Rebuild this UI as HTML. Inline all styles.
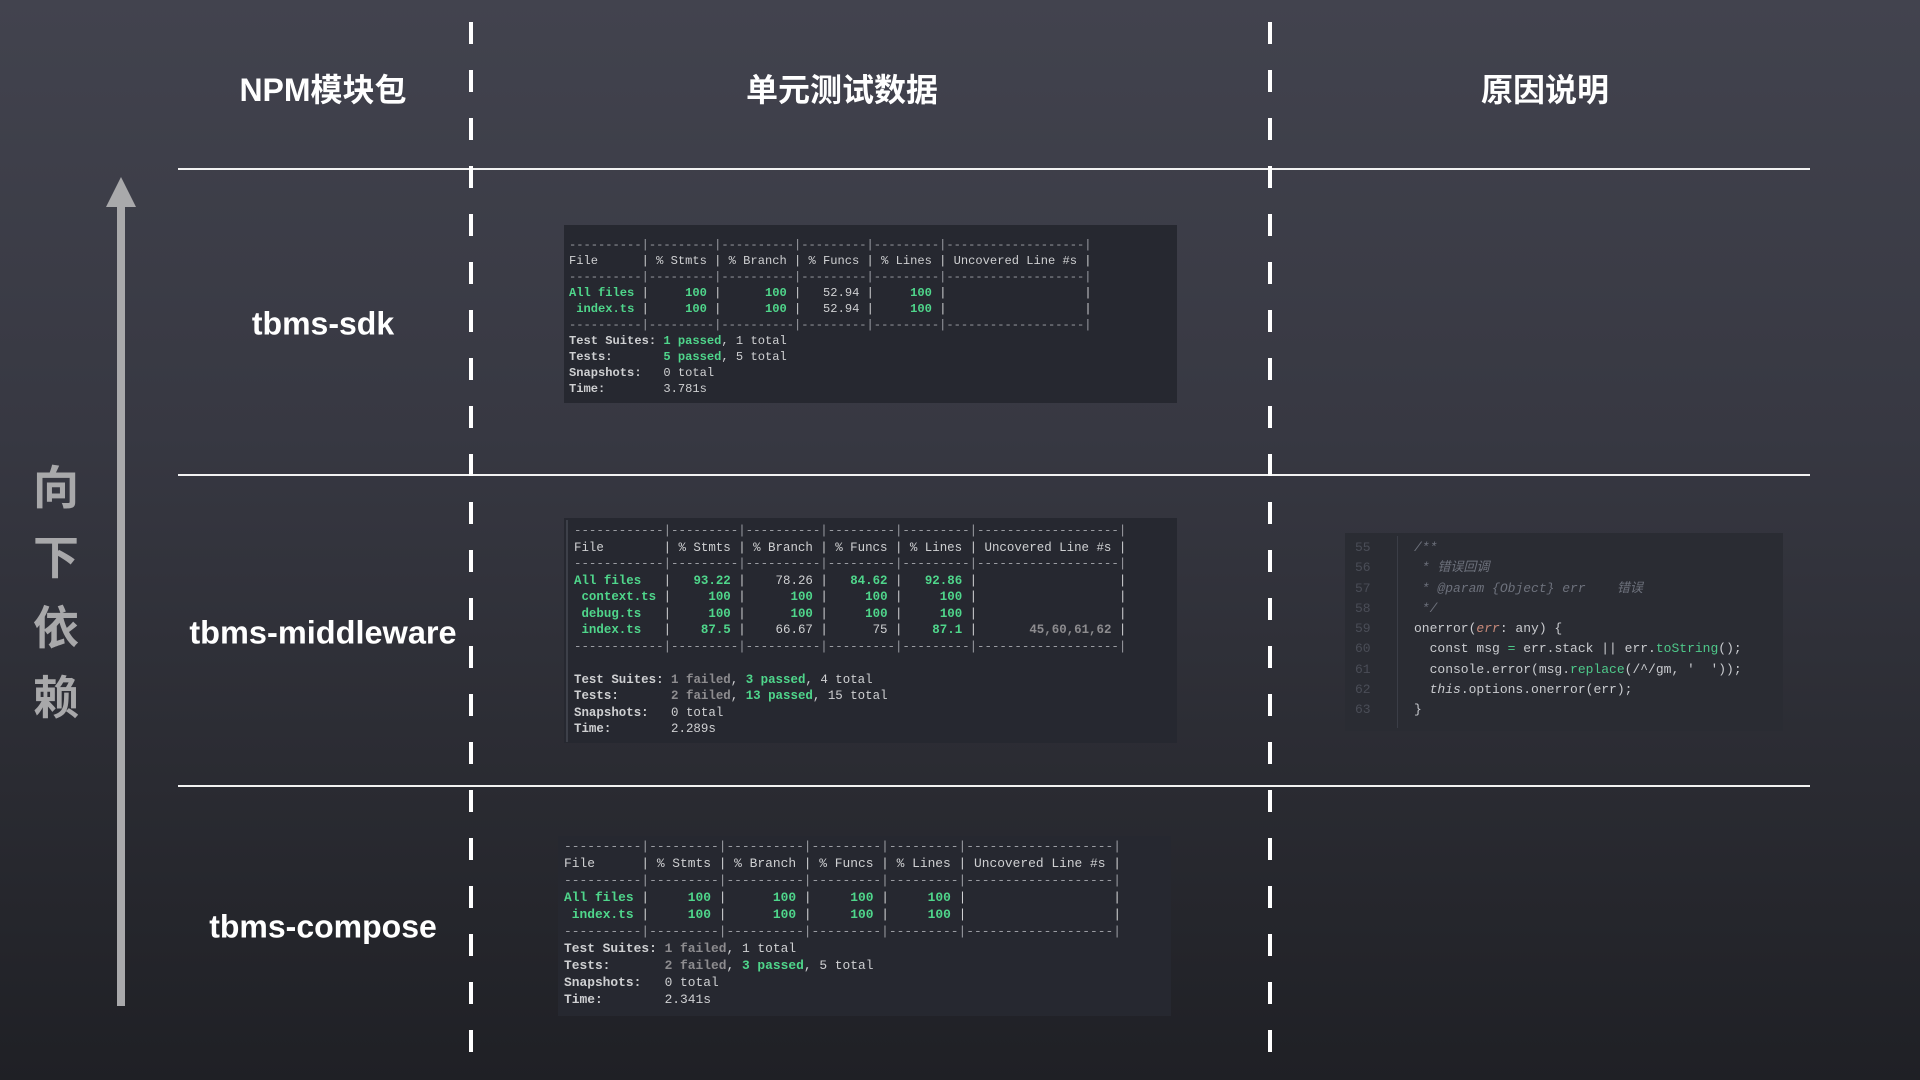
<!DOCTYPE html>
<html><head><meta charset="utf-8">
<style>
*{margin:0;padding:0;box-sizing:border-box}
html,body{width:1920px;height:1080px;overflow:hidden}
body{background:linear-gradient(180deg,#42434e 0%,#373842 40%,#2b2c33 70%,#1f2025 100%);position:relative;font-family:"Liberation Sans","Noto Sans CJK SC",sans-serif;color:#fff}
.abs{position:absolute}
.h{font-weight:bold;font-size:32px;transform:translate(-50%,-50%);white-space:nowrap}
.hl{position:absolute;height:2px;background:#f2f2f2;left:178px;width:1632px}
.dash{position:absolute;width:4px;top:22px;height:1036px;background:repeating-linear-gradient(180deg,#fff 0,#fff 22px,transparent 22px,transparent 48px)}
.term{position:absolute;background:#262830}
pre{position:absolute;font-family:"Liberation Mono",monospace;color:#cfd0d2;white-space:pre}
.g{color:#4fd68b;font-weight:bold}
.f{color:#8d8c8f;font-weight:bold}
.b{font-weight:bold}
.d{color:#9a9ca2}
.code{font-family:"Liberation Mono",monospace;font-size:13px;line-height:20.3px;color:#c9cbcf}
.c{color:#6d717c;font-style:italic}
.n{color:#4a4d57}
.gr{color:#4ec98a}
.or{color:#c98a7a;font-style:italic}
.it{font-style:italic}
</style></head><body>

<div class="abs h" style="left:323px;top:88px">NPM模块包</div>
<div class="abs h" style="left:842px;top:88px">单元测试数据</div>
<div class="abs h" style="left:1545px;top:88px">原因说明</div>

<div class="hl" style="top:168px"></div>
<div class="hl" style="top:474px"></div>
<div class="hl" style="top:785px"></div>

<div class="dash" style="left:469px"></div>
<div class="dash" style="left:1268px"></div>

<div class="abs" style="left:117px;top:198px;width:8px;height:808px;background:#a9a9ab"></div>
<div class="abs" style="left:106px;top:177px;width:0;height:0;border-left:15px solid transparent;border-right:15px solid transparent;border-bottom:30px solid #a9a9ab"></div>

<div class="abs" style="left:33px;top:453px;width:46px;font-size:46px;line-height:70px;font-weight:bold;color:#a8a8aa;text-align:center">向<br>下<br>依<br>赖</div>

<div class="abs h" style="left:323px;top:324px">tbms-sdk</div>
<div class="abs h" style="left:323px;top:633px;font-size:32.5px">tbms-middleware</div>
<div class="abs h" style="left:323px;top:927px">tbms-compose</div>

<div class="term" style="left:564px;top:225px;width:613px;height:178px"></div>
<pre style="left:569px;top:237px;font-size:12.1px;line-height:16px"><span class="d">----------|---------|----------|---------|---------|-------------------|</span>
File      | % Stmts | % Branch | % Funcs | % Lines | Uncovered Line #s |
<span class="d">----------|---------|----------|---------|---------|-------------------|</span>
<span class="g">All files</span> |     <span class="g">100</span> |      <span class="g">100</span> |   52.94 |     <span class="g">100</span> |                   |
 <span class="g">index.ts</span> |     <span class="g">100</span> |      <span class="g">100</span> |   52.94 |     <span class="g">100</span> |                   |
<span class="d">----------|---------|----------|---------|---------|-------------------|</span>
<span class="b">Test Suites:</span> <span class="g">1 passed</span>, 1 total
<span class="b">Tests:</span>       <span class="g">5 passed</span>, 5 total
<span class="b">Snapshots:</span>   0 total
<span class="b">Time:</span>        3.781s</pre>

<div class="term" style="left:564px;top:518px;width:613px;height:225px"></div>
<div class="abs" style="left:566px;top:520px;width:2px;height:222px;background:#3d4049"></div>
<pre style="left:574px;top:523px;font-size:12.45px;line-height:16.5px"><span class="d">------------|---------|----------|---------|---------|-------------------|</span>
File        | % Stmts | % Branch | % Funcs | % Lines | Uncovered Line #s |
<span class="d">------------|---------|----------|---------|---------|-------------------|</span>
<span class="g">All files</span>   |   <span class="g">93.22</span> |    78.26 |   <span class="g">84.62</span> |   <span class="g">92.86</span> |                   |
 <span class="g">context.ts</span> |     <span class="g">100</span> |      <span class="g">100</span> |     <span class="g">100</span> |     <span class="g">100</span> |                   |
 <span class="g">debug.ts</span>   |     <span class="g">100</span> |      <span class="g">100</span> |     <span class="g">100</span> |     <span class="g">100</span> |                   |
 <span class="g">index.ts</span>   |    <span class="g">87.5</span> |    66.67 |      75 |    <span class="g">87.1</span> |       <span class="f">45,60,61,62</span> |
<span class="d">------------|---------|----------|---------|---------|-------------------|</span>

<span class="b">Test Suites:</span> <span class="f">1 failed</span>, <span class="g">3 passed</span>, 4 total
<span class="b">Tests:</span>       <span class="f">2 failed</span>, <span class="g">13 passed</span>, 15 total
<span class="b">Snapshots:</span>   0 total
<span class="b">Time:</span>        2.289s</pre>

<div class="term" style="left:558px;top:836px;width:613px;height:180px"></div>
<pre style="left:564px;top:838px;font-size:12.9px;line-height:17px"><span class="d">----------|---------|----------|---------|---------|-------------------|</span>
File      | % Stmts | % Branch | % Funcs | % Lines | Uncovered Line #s |
<span class="d">----------|---------|----------|---------|---------|-------------------|</span>
<span class="g">All files</span> |     <span class="g">100</span> |      <span class="g">100</span> |     <span class="g">100</span> |     <span class="g">100</span> |                   |
 <span class="g">index.ts</span> |     <span class="g">100</span> |      <span class="g">100</span> |     <span class="g">100</span> |     <span class="g">100</span> |                   |
<span class="d">----------|---------|----------|---------|---------|-------------------|</span>
<span class="b">Test Suites:</span> <span class="f">1 failed</span>, 1 total
<span class="b">Tests:</span>       <span class="f">2 failed</span>, <span class="g">3 passed</span>, 5 total
<span class="b">Snapshots:</span>   0 total
<span class="b">Time:</span>        2.341s</pre>

<div class="term" style="left:1345px;top:533px;width:438px;height:198px;background:#2a2c33"></div>
<div class="abs" style="left:1397px;top:536px;width:1px;height:192px;background:#3b3e47"></div>
<pre class="code n" style="left:1355px;top:538px">55
56
57
58
59
60
61
62
63</pre>
<pre class="code" style="left:1414px;top:538px;font-family:'Liberation Mono','Noto Sans CJK SC',monospace"><span class="c">/**</span>
<span class="c"> * 错误回调</span>
<span class="c"> * @param {Object} err    错误</span>
<span class="c"> */</span>
onerror(<span class="or">err</span>: any) {
  const msg <span class="gr">=</span> err.stack || err.<span class="gr">toString</span>();
  console.error(msg.<span class="gr">replace</span>(/^/gm, '  '));
  <span class="it">this</span>.options.onerror(err);
}</pre>

</body></html>
